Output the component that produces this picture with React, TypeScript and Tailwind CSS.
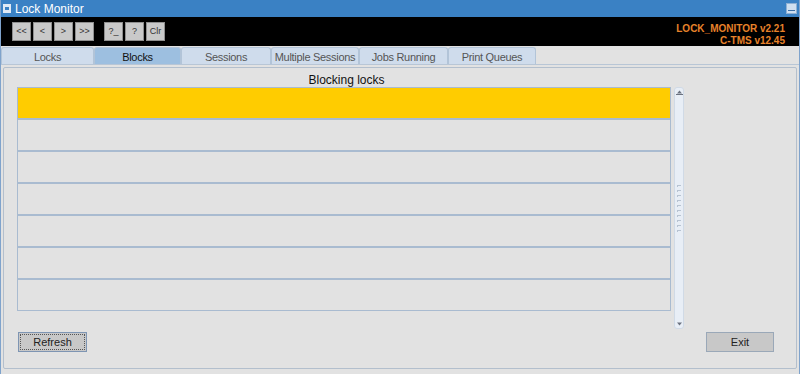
import React from 'react';

const navButtons = ['<<', '<', '>', '>>'];
const helpButtons = ['?_', '?', 'Clr'];

const tabs = [
  { label: 'Locks', w: 'w-[93px]' },
  { label: 'Blocks', w: 'w-[87px]', active: true },
  { label: 'Sessions', w: 'w-[90px]' },
  { label: 'Multiple Sessions', w: 'w-[88px]' },
  { label: 'Jobs Running', w: 'w-[89px]' },
  { label: 'Print Queues', w: 'w-[88px]' },
];

const rows = [0, 1, 2, 3, 4, 5, 6];

const ToolButton: React.FC<{ label: string }> = ({ label }) => (
  <button className="w-[19px] h-[19px] bg-[#c9c9c9] border border-[#8f8f8f] text-[9px] text-[#333] flex items-center justify-center leading-none">
    {label}
  </button>
);

export default function App() {
  return (
    <div
      className="w-[800px] h-[374px] bg-[#e2e2e2] flex flex-col overflow-hidden border-l border-r border-[#7fa3cc]"
      style={{ fontFamily: '"Liberation Sans", Arial, sans-serif' }}
    >
      {/* title bar */}
      <div className="h-[17px] bg-[#3a81c4] flex items-center justify-between pl-[2px] pr-[2px] shrink-0">
        <div className="flex items-center gap-[4px]">
          <div className="w-[8px] h-[9px] bg-[#dfe9f5] flex items-center justify-center">
            <div className="w-[4px] h-[3px] bg-[#3a81c4]" />
          </div>
          <span className="text-white text-[12px] leading-none">Lock Monitor</span>
        </div>
        <div className="w-[11px] h-[11px] bg-[#cfdff0] border border-[#8fb0d3] flex items-end justify-center pb-[2px]">
          <div className="w-[7px] h-[1px] bg-[#3a6ea5]" />
        </div>
      </div>

      {/* toolbar */}
      <div className="h-[29px] bg-black flex items-start justify-between pl-[11px] pr-[14px] shrink-0">
        <div className="flex items-center mt-[5px]">
          <div className="flex gap-[2px]">
            {navButtons.map((b) => (
              <ToolButton key={b} label={b} />
            ))}
          </div>
          <div className="flex gap-[2px] ml-[10px]">
            {helpButtons.map((b) => (
              <ToolButton key={b} label={b} />
            ))}
          </div>
        </div>
        <div className="flex flex-col items-end mt-[6px] text-[10px] font-bold text-[#e8822a] leading-[12px]">
          <span>LOCK_MONITOR v2.21</span>
          <span>C-TMS v12.45</span>
        </div>
      </div>

      {/* tabs */}
      <div className="h-[18px] flex items-end shrink-0 bg-[#e2e2e2]">
        {tabs.map((t) => (
          <div
            key={t.label}
            className={`${t.w} h-[17px] flex items-center justify-center pt-[2px] text-[11px] tracking-[-0.3px] whitespace-nowrap rounded-t-[3px] border border-b-0 border-[#b2c4d8] ${
              t.active ? 'bg-[#9dbfe0] text-[#111]' : 'bg-[#cfdcec] text-[#555]'
            }`}
          >
            {t.label}
          </div>
        ))}
      </div>

      {/* body */}
      <div className="flex-1 px-[2px] pt-[2px] pb-[5px] border-t border-[#b8c6d6]">
        <div className="h-full border border-[#b3bfcd] rounded-[2px] flex flex-col pl-[13px] pr-[20px]">
          <div className="h-[19px] flex items-end justify-center text-[12px] leading-[14px] text-[#111] pr-[100px]">
            Blocking locks
          </div>
          <div className="flex gap-[3px]">
            <div className="w-[654px] flex flex-col">
              {rows.map((r) => (
                <div
                  key={r}
                  className={`h-[32px] border border-[#a9bbd0] ${r === 0 ? 'bg-[#ffcc00]' : 'bg-[#e2e2e2]'}`}
                />
              ))}
            </div>
            <div className="w-[10px] h-[242px] bg-[#e8eef6] border border-[#d0dae6] rounded-[3px] flex flex-col items-center justify-between py-[2px]">
              <svg width="7" height="5" viewBox="0 0 7 5">
                <path d="M3.5 0.5 L6 3.5 L1 3.5 Z" fill="#6b7280" />
                <rect x="0" y="4" width="7" height="1" fill="#6b7280" />
              </svg>
              <div className="flex flex-col gap-[3px]">
                {[0, 1, 2, 3, 4, 5, 6, 7, 8, 9].map((i) => (
                  <div key={i} className="w-[4px] h-[2px] border-t border-l border-[#b7c3d2]" />
                ))}
              </div>
              <svg width="7" height="4" viewBox="0 0 7 4">
                <path d="M1 0.5 L6 0.5 L3.5 3.5 Z" fill="#6b7280" />
              </svg>
            </div>
          </div>
          <div className="flex justify-between mt-[3px] pl-[1px] pr-[2px]">
            <button className="w-[69px] h-[20px] bg-[#c8c8c8] border border-[#7e95b3] outline outline-1 outline-dotted outline-offset-[-3px] outline-[#555] text-[11px] text-[#222]">
              Refresh
            </button>
            <button className="w-[68px] h-[20px] bg-[#c8c8c8] border border-[#9aa8b8] text-[11px] text-[#222]">
              Exit
            </button>
          </div>
        </div>
      </div>
    </div>
  );
}
